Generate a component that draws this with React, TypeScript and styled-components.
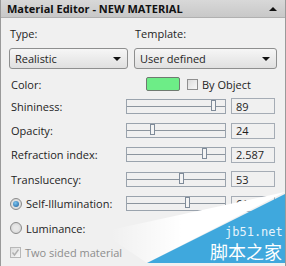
import { Fragment } from "react";
import styled, { createGlobalStyle } from "styled-components";

const Global = createGlobalStyle`
  html, body { margin: 0; padding: 0; background: #f0f0f0; }
  body { font-family: "Open Sans", "Liberation Sans", sans-serif; font-size: 11px; color: #1e1e1e; }
`;

const Panel = styled.div`
  position: relative;
  width: 286px;
  height: 266px;
  box-sizing: border-box;
  border-left: 1px solid #9a9a9a;
  border-right: 1px solid #9a9a9a;
  background: #f0f0f0;
  overflow: hidden;
`;

const TitleBar = styled.div`
  height: 17px;
  display: flex;
  align-items: center;
  justify-content: space-between;
  padding: 0 8px 0 6px;
  background: linear-gradient(#d8d8d8, #c8c8c8);
  border-bottom: 1px solid #b0b0b0;
  font-weight: 700;
  font-size: 11px;
  color: #111;
`;

const Collapse = styled.span`
  width: 0;
  height: 0;
  border-left: 4px solid transparent;
  border-right: 4px solid transparent;
  border-bottom: 4px solid #111;
`;

const Body = styled.div`
  padding: 8px 8px 0 8px;
`;

const TwoCols = styled.div`
  display: grid;
  grid-template-columns: 119px 143px;
  column-gap: 6px;
  row-gap: 7px;
`;

const Label = styled.div<{ $dim?: boolean }>`
  padding-left: 1px;
  color: ${(p) => (p.$dim ? "#8d8d8d" : "#1e1e1e")};
  white-space: nowrap;
`;

const Combo = styled.div`
  height: 21px;
  box-sizing: border-box;
  border: 1px solid #8e8f8f;
  border-radius: 3px;
  background: linear-gradient(#f6f6f6, #e0e0e0);
  display: flex;
  align-items: center;
  justify-content: space-between;
  padding: 0 6px 0 5px;
`;

const Arrow = styled.span`
  width: 0;
  height: 0;
  border-left: 4px solid transparent;
  border-right: 4px solid transparent;
  border-top: 4px solid #111;
`;

const Rows = styled.div`
  margin: 5px 0 0 1px;
  display: grid;
  grid-template-columns: 111px 100px 44px;
  column-gap: 5px;
  grid-template-rows: 20px;
  grid-auto-rows: 24.4px;
  align-items: center;
`;

const ColorRow = styled.div`
  grid-column: 2 / 4;
  display: flex;
  align-items: center;
  gap: 7px;
  padding-left: 20px;
`;

const Swatch = styled.div`
  width: 32px;
  height: 12px;
  border: 1px solid #6f7a70;
  border-radius: 2px;
  background: #6ded87;
`;

const Check = styled.span<{ $disabled?: boolean }>`
  width: 11px;
  height: 11px;
  box-sizing: border-box;
  border: 1px solid ${(p) => (p.$disabled ? "#b8b8b8" : "#8f8f8f")};
  background: linear-gradient(135deg, #dcdcdc, #f8f8f8);
  display: inline-flex;
  align-items: center;
  justify-content: center;
  flex-shrink: 0;
`;

const Inline = styled.div<{ $dim?: boolean }>`
  display: flex;
  align-items: center;
  gap: 4px;
  white-space: nowrap;
  color: ${(p) => (p.$dim ? "#8d8d8d" : "#1e1e1e")};
`;

const Radio = styled.span<{ $on?: boolean }>`
  width: 12px;
  height: 12px;
  box-sizing: border-box;
  border-radius: 50%;
  border: 1px solid #8a8a8a;
  background: radial-gradient(circle, #e8e8e8 30%, #cfcfcf 100%);
  display: inline-flex;
  align-items: center;
  justify-content: center;
  &::after {
    content: "";
    display: ${(p) => (p.$on ? "block" : "none")};
    width: 6px;
    height: 6px;
    border-radius: 50%;
    background: radial-gradient(circle at 40% 35%, #7bc4f0, #1b5c99);
  }
`;

const Slider = styled.div`
  position: relative;
  height: 15px;
  box-sizing: border-box;
  border: 1px solid #9aa3ad;
  display: flex;
  align-items: center;
  &::before {
    content: "";
    flex: 1;
    height: 1px;
    background: #8c959e;
  }
`;

const Thumb = styled.span`
  position: absolute;
  top: 0px;
  width: 5px;
  height: 11px;
  box-sizing: border-box;
  border: 1px solid #7f8b99;
  background: #f4f4f4;
`;

const Field = styled.div`
  height: 16px;
  box-sizing: border-box;
  border: 1px solid #a5acb5;
  padding-left: 4px;
  display: flex;
  align-items: center;
`;

/* watermark overlay in the bottom-right corner */
const Watermark = styled.div`
  position: absolute;
  inset: 0;
  pointer-events: none;
`;

const Wedge = styled.div`
  position: absolute;
  inset: 0;
  background: linear-gradient(to right, rgba(255, 255, 255, 0) 110px, #ffffff 180px);
  clip-path: polygon(100px 232px, 284px 192px, 146px 263px);
`;

const Blue = styled.div`
  position: absolute;
  inset: 0;
  background: #3fa8dd;
  clip-path: polygon(146px 263px, 284px 194px, 284px 263px);
`;

const MarkUrl = styled.span`
  position: absolute;
  left: 224px;
  top: 226px;
  font-family: "DejaVu Sans Mono", monospace;
  font-size: 12px;
  line-height: 12px;
  color: #e6f3fb;
`;

const MarkName = styled.span`
  position: absolute;
  left: 209px;
  top: 242px;
  font-family: "Noto Sans CJK SC", sans-serif;
  font-size: 18px;
  line-height: 18px;
  color: #ffffff;
`;

type SliderRow = { label: string; value: string; pos: number; radio?: boolean; on?: boolean };

const sliders: SliderRow[] = [
  { label: "Shininess:", value: "89", pos: 87 },
  { label: "Opacity:", value: "24", pos: 26 },
  { label: "Refraction index:", value: "2.587", pos: 78 },
  { label: "Translucency:", value: "53", pos: 55 },
  { label: "Self-Illumination:", value: "61", pos: 61, radio: true, on: true },
];

export default function App() {
  return (
    <Panel>
      <Global />
      <TitleBar>
        <span>Material Editor - NEW MATERIAL</span>
        <Collapse />
      </TitleBar>
      <Body>
        <TwoCols>
          <Label>Type:</Label>
          <Label>Template:</Label>
          <Combo>
            <span>Realistic</span>
            <Arrow />
          </Combo>
          <Combo>
            <span>User defined</span>
            <Arrow />
          </Combo>
        </TwoCols>
        <Rows>
          <Label>Color:</Label>
          <ColorRow>
            <Swatch />
            <Inline>
              <Check />
              <span>By Object</span>
            </Inline>
          </ColorRow>
          {sliders.map((s) => (
            <Fragment key={s.label}>
              {s.radio ? (
                <Inline>
                  <Radio $on={s.on} />
                  <span>{s.label}</span>
                </Inline>
              ) : (
                <Label>{s.label}</Label>
              )}
              <Slider>
                <Thumb style={{ left: `${s.pos - 3}px` }} />
              </Slider>
              <Field>{s.value}</Field>
            </Fragment>
          ))}
          <Inline>
            <Radio />
            <span>Luminance:</span>
          </Inline>
          <div />
          <div />
          <Inline $dim>
            <Check $disabled>
              <svg width="9" height="9" viewBox="0 0 9 9">
                <path d="M1.5 4.5 L3.5 7 L7.5 1.5" fill="none" stroke="#b0b0b0" strokeWidth="1.4" />
              </svg>
            </Check>
            <span>Two sided material</span>
          </Inline>
        </Rows>
      </Body>
      <Watermark>
        <Wedge />
        <Blue />
        <MarkUrl>jb51.net</MarkUrl>
        <MarkName>脚本之家</MarkName>
      </Watermark>
    </Panel>
  );
}
